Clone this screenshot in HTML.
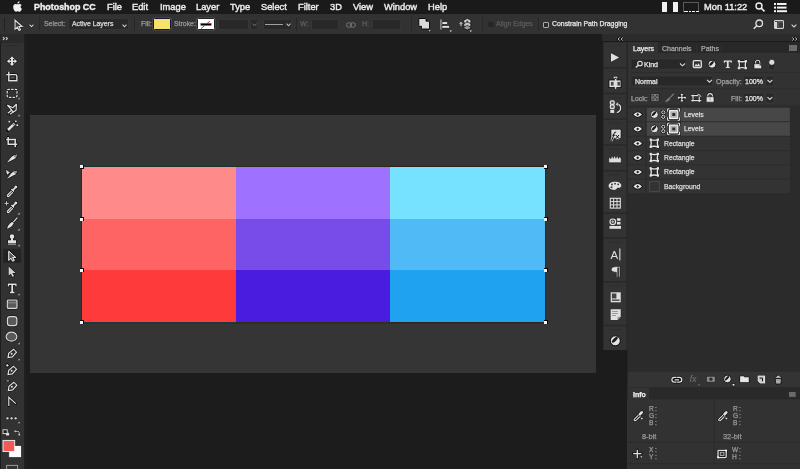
<!DOCTYPE html>
<html><head><meta charset="utf-8">
<style>
*{margin:0;padding:0;box-sizing:border-box}
html,body{width:800px;height:469px;overflow:hidden;background:#1c1c1c;font-family:"Liberation Sans",sans-serif;-webkit-font-smoothing:antialiased}
body{position:relative}
.a{position:absolute}
.t,.mi,.lbl{will-change:transform;-webkit-text-stroke:0.25px currentColor}
.t{position:absolute;white-space:nowrap;line-height:1}
svg{position:absolute;overflow:visible;will-change:transform}
#menubar{left:0;top:0;width:800px;height:14px;background:#1a1a1a}
.mi{position:absolute;top:3px;font-size:9.3px;color:#ececec;line-height:9px;white-space:nowrap;-webkit-text-stroke:0.4px #ececec}
#opts{left:0;top:14px;width:800px;height:20.3px;background:#323232}
.lbl{position:absolute;font-size:6.9px;color:#9a9a9a;line-height:8px;white-space:nowrap;margin-top:-0.3px}
.fld{position:absolute;background:#282828;border-radius:2px;box-shadow:inset 0 0 0 0.8px #3a3a3a}
.sep{position:absolute;width:1px;background:#282828}
#tbhead{left:0;top:34.3px;width:24px;height:7.5px;background:#2a2a2a}
#toolbar{left:0.5px;top:42px;width:23.3px;height:427px;background:#323232;border-top:1px solid #2a2a2a}
#paste{left:30px;top:115px;width:566.3px;height:258px;background:#353535;box-shadow:inset 0 0.6px 0 #3b3b3b}
#iconcol{left:603.5px;top:42.5px;width:22.8px;height:307.5px}
#phead{left:602px;top:34.3px;width:198px;height:7.2px;background:#2b2b2b}
#layers{left:627.5px;top:42px;width:172.5px;height:345px;background:#323232}
#info{left:627px;top:387px;width:173px;height:82px;background:#323232}
</style></head><body>
<div id="menubar" class="a">
 <svg style="left:13px;top:0.8px" width="9" height="11" viewBox="0 0 9 11"><path d="M6.600 0.200C6.700 1.300 5.800 2.600 4.400 2.600C4.300 1.400 5.300 0.300 6.600 0.200Z" fill="#f2f2f2"/><path d="M4.500 3.300C5.200 3.300 5.800 2.900 6.600 2.900C7 2.900 8 3 8.600 3.900C7 4.900 7.300 7.100 8.900 7.700C8.500 8.900 7.600 10.700 6.500 10.700C5.900 10.700 5.500 10.300 4.700 10.300C3.900 10.300 3.500 10.700 2.900 10.700C1.800 10.700 0.200 8.300 0.200 6C0.200 4.100 1.400 3 2.600 3C3.400 3 4 3.300 4.500 3.300Z" fill="#f2f2f2"/></svg>
 <div class="mi" style="left:34px;font-weight:bold;font-size:8.9px;color:#f2f2f2">Photoshop CC</div>
 <div class="mi" style="left:107px">File</div>
 <div class="mi" style="left:132px">Edit</div>
 <div class="mi" style="left:160px">Image</div>
 <div class="mi" style="left:196px">Layer</div>
 <div class="mi" style="left:230px">Type</div>
 <div class="mi" style="left:260.5px">Select</div>
 <div class="mi" style="left:297.5px">Filter</div>
 <div class="mi" style="left:329.5px">3D</div>
 <div class="mi" style="left:352.5px">View</div>
 <div class="mi" style="left:383.5px">Window</div>
 <div class="mi" style="left:428px">Help</div>
 <div class="a" style="left:662px;top:2px;width:5px;height:10px;background:#f0f0f0"></div>
 <div class="a" style="left:672.5px;top:2px;width:5.5px;height:10px;background:#f0f0f0"></div>
 <div class="a" style="left:683.3px;top:2px;width:15.6px;height:10px;border:1px solid #5a5a5a;border-bottom:none"></div>
 <div class="a" style="left:684px;top:10.5px;width:3.6px;height:1.4px;background:#f0f0f0"></div>
 <div class="a" style="left:688.6px;top:10.5px;width:2.6px;height:1.4px;background:#f0f0f0"></div>
 <div class="a" style="left:692.3px;top:10.5px;width:2.6px;height:1.4px;background:#f0f0f0"></div>
 <div class="a" style="left:695.8px;top:10.5px;width:3px;height:1.4px;background:#f0f0f0"></div>
 <div class="mi" style="left:703.5px">Mon 11:22</div>
 <svg style="left:755px;top:2px" width="11" height="10" viewBox="0 0 11 10"><circle cx="4" cy="4" r="3" fill="none" stroke="#f0f0f0" stroke-width="1.4"/><path d="M6.200 6.200L9.500 9.300" stroke="#f0f0f0" stroke-width="1.600"/></svg>
 <svg style="left:773.5px;top:2.5px" width="13" height="10" viewBox="0 0 13 10"><rect x="0" y="0" width="2" height="2" fill="#f0f0f0"/><rect x="3" y="0" width="9.500" height="2" fill="#f0f0f0"/><rect x="0" y="3.600" width="2" height="2" fill="#f0f0f0"/><rect x="3" y="3.600" width="9.500" height="2" fill="#f0f0f0"/><rect x="0" y="7.200" width="2" height="2" fill="#f0f0f0"/><rect x="3" y="7.200" width="10" height="2" fill="#f0f0f0"/></svg>
</div>
<div id="opts" class="a">
 <div class="a" style="left:3.5px;top:3.5px;width:1px;height:13.5px;background:#222"></div>
 <svg style="left:13.8px;top:5px" width="10" height="13" viewBox="0 0 10 13"><path d="M1 1V10.300L3.300 8.200L5 11.500L6.600 10.700L5 7.500H8.200Z" fill="none" stroke="#080808" stroke-width="2" stroke-linejoin="round"/><path d="M1 1V10.300L3.300 8.200L5 11.500L6.600 10.700L5 7.500H8.200Z" fill="#3a3a3a" stroke="#e2e2e2" stroke-width="1.100" stroke-linejoin="miter"/></svg>
 <svg style="left:28.5px;top:9.6px" width="5" height="4" viewBox="0 0 5 4"><path d="M0.500 0.600L2.500 2.600L4.500 0.600" fill="none" stroke="#080808" stroke-width="1.900"/><path d="M0.500 0.600L2.500 2.600L4.500 0.600" fill="none" stroke="#dadada" stroke-width="1.100"/></svg>
 <div class="sep" style="left:38.5px;top:3px;height:14px"></div>
 <div class="lbl" style="left:43.5px;top:6.5px">Select:</div>
 <div class="fld" style="left:68px;top:4.4px;width:61px;height:11.4px"></div>
 <div class="lbl" style="left:72px;top:6.5px;color:#dcdcdc">Active Layers</div>
 <svg style="left:122px;top:9.5px" width="5" height="4" viewBox="0 0 5 4"><path d="M0.500 0.700L2.500 2.800L4.500 0.700" fill="none" stroke="#d0d0d0" stroke-width="1.100"/></svg>
 <div class="sep" style="left:134px;top:3px;height:14px"></div>
 <div class="lbl" style="left:141px;top:6.5px">Fill:</div>
 <div class="a" style="left:152.5px;top:4px;width:18.5px;height:12.4px;background:#f7e26a;border:1.3px solid #14143a;border-radius:1.5px;box-shadow:0 0 0 0.6px #555"></div>
 <div class="lbl" style="left:173.5px;top:6.5px">Stroke:</div>
 <div class="a" style="left:196.5px;top:4px;width:18.5px;height:12.4px;background:#fff;border:1.3px solid #222;border-radius:1.5px;box-shadow:0 0 0 0.6px #555"></div>
 <svg style="left:200px;top:5.5px" width="12" height="10" viewBox="0 0 12 10"><path d="M1 8.600L10 1" stroke="#ee2020" stroke-width="1"/><rect x="0.700" y="3.200" width="10.600" height="2.400" fill="#000" stroke="#999" stroke-width="0.500"/></svg>
 <div class="fld" style="left:218px;top:4.5px;width:31px;height:11px"></div>
 <div class="fld" style="left:250px;top:4.5px;width:8px;height:11px"></div>
 <svg style="left:252px;top:9.2px" width="5" height="4" viewBox="0 0 5 4"><path d="M0.500 0.700L2.500 2.800L4.500 0.700" fill="none" stroke="#777" stroke-width="1"/></svg>
 <div class="fld" style="left:263px;top:4.5px;width:29px;height:11px"></div>
 <div class="a" style="left:265px;top:9.6px;width:18px;height:1px;background:#a0a0a0"></div>
 <svg style="left:286px;top:8.6px" width="5" height="4" viewBox="0 0 5 4"><path d="M0.500 0.700L2.500 2.800L4.500 0.700" fill="none" stroke="#c0c0c0" stroke-width="1.100"/></svg>
 <div class="sep" style="left:296px;top:3px;height:14px"></div>
 <div class="lbl" style="left:300px;top:6.5px;color:#5e5e5e">W:</div>
 <div class="fld" style="left:311px;top:4.5px;width:28px;height:11px"></div>
 <svg style="left:346px;top:8px" width="10" height="6" viewBox="0 0 10 6"><rect x="0.600" y="0.800" width="5" height="4.400" rx="2.200" fill="none" stroke="#6a6a6a" stroke-width="1.100"/><rect x="4.300" y="0.800" width="5" height="4.400" rx="2.200" fill="none" stroke="#6a6a6a" stroke-width="1.100"/></svg>
 <div class="lbl" style="left:362px;top:6.5px;color:#5e5e5e">H:</div>
 <div class="fld" style="left:371.5px;top:4.5px;width:29px;height:11px"></div>
 <div class="sep" style="left:411px;top:3px;height:14px"></div>
 <svg style="left:418px;top:4px" width="14" height="14" viewBox="0 0 14 14"><path d="M0.800 0.500H7.300Q8 0.500 8 1.200V3.200H10.800Q11.500 3.200 11.500 3.900V10.300Q11.500 11 10.800 11H4.200Q3.500 11 3.500 10.300V8.300H1.500Q0.800 8.300 0.800 7.600Z" fill="#dadada" stroke="#000" stroke-width="0.900"/><path d="M10.600 12.200L12.600 12.200L11.600 13.500Z" fill="#e8e8e8"/></svg>
 <svg style="left:439.5px;top:4.5px" width="13" height="14" viewBox="0 0 13 14"><rect x="0.500" y="0.500" width="1" height="10" fill="#d8d8d8"/><rect x="2" y="2.800" width="5.500" height="2.500" fill="#e0e0e0" stroke="#000" stroke-width="0.500"/><rect x="2" y="6.600" width="7.500" height="2.500" fill="#e0e0e0" stroke="#000" stroke-width="0.500"/><path d="M9.500 11.500L12 11.500L10.750 13Z" fill="#e8e8e8"/></svg>
 <svg style="left:459px;top:4px" width="14" height="14" viewBox="0 0 14 14"><path d="M2 8L2 4.500M0.700 5.800L2 4.300L3.300 5.800" stroke="#e0e0e0" stroke-width="1" fill="none"/><path d="M8.300 0.500L11.800 2.300L11.800 4.500L8.300 6.300L4.800 4.500L4.800 2.300Z" fill="#d8d8d8" stroke="#000" stroke-width="0.600"/><path d="M8.300 4L11.800 5.800L11.800 8L8.300 9.800L4.800 8L4.800 5.800Z" fill="#c8c8c8" stroke="#000" stroke-width="0.600"/><path d="M8.300 7.300L11.800 9.100L11.800 10.300L8.300 12.100L4.800 10.300L4.800 9.100Z" fill="#999" stroke="#000" stroke-width="0.600"/><circle cx="8.300" cy="3.400" r="1" fill="#333"/><path d="M10.500 12.500L13 12.500L11.750 14Z" fill="#e8e8e8"/></svg>
 <div class="sep" style="left:482px;top:3px;height:14px"></div>
 <div class="a" style="left:488px;top:7.6px;width:5.6px;height:5.6px;border-radius:1px;background:#262626"></div>
 <div class="lbl" style="left:496px;top:6.5px;color:#5c5c5c">Align Edges</div>
 <div class="sep" style="left:537.5px;top:3px;height:14px"></div>
 <div class="a" style="left:543px;top:8px;width:6px;height:6px;border:1px solid #aaa;border-radius:1px;background:#2a2a2a"></div>
 <div class="lbl" style="left:551.5px;top:6.5px;color:#e6e6e6">Constrain Path Dragging</div>
 <svg style="left:752.5px;top:5px" width="11" height="11" viewBox="0 0 11 11"><circle cx="6.200" cy="4.300" r="3.300" fill="none" stroke="#e0e0e0" stroke-width="1.300"/><path d="M3.800 6.800L0.800 9.800" stroke="#e0e0e0" stroke-width="1.500"/></svg>
 <div class="a" style="left:773.6px;top:6.2px;width:10.8px;height:9px;border:1.4px solid #d4d4d4;border-radius:1px;background:#555"></div>
 <div class="a" style="left:775px;top:7.6px;width:2.4px;height:6.2px;background:#d4d4d4"></div>
 <div class="a" style="left:778.5px;top:8.6px;width:4.5px;height:4.2px;background:#3a3a3a"></div>
 <svg style="left:791px;top:9.5px" width="6" height="4" viewBox="0 0 6 4"><path d="M0.600 0.700L3 3L5.400 0.700" fill="none" stroke="#d0d0d0" stroke-width="1.100"/></svg>
</div>
<div id="tbhead" class="a"></div>
<div id="toolbar" class="a"></div>
<div class="a" style="left:23.5px;top:34px;width:2px;height:435px;background:#1f1f1f"></div>
<svg style="left:0;top:0" width="24" height="469" viewBox="0 0 24 469">
 <path d="M2.800 37L4.600 38.500L2.800 40M5.800 37L7.600 38.500L5.800 40" fill="none" stroke="#0a0a0a" stroke-width="1.900"/><path d="M2.800 37L4.600 38.500L2.800 40M5.800 37L7.600 38.500L5.800 40" fill="none" stroke="#c4c4c4" stroke-width="1.100"/>
 <path d="M6.500 45.600H18.500" stroke="#2a2a2a" stroke-width="0.800"/>
 <!-- move -->
 <path d="M12 56.300L14.600 59H13V60.400H14.400V58.800L17.100 61.200L14.400 63.600V62H13V63.400H14.600L12 66.100L9.400 63.400H11V62H9.600V63.600L6.900 61.200L9.600 58.800V60.400H11V59H9.400Z" fill="#0c0c0c" stroke="#0c0c0c" stroke-width="1.100" stroke-linejoin="round"/><path d="M12 56.300L14.600 59H13V60.400H14.400V58.800L17.100 61.200L14.400 63.600V62H13V63.400H14.600L12 66.100L9.400 63.400H11V62H9.600V63.600L6.900 61.200L9.600 58.800V60.400H11V59H9.400Z" fill="#e2e2e2" />
 <!-- artboard -->
 <path d="M8.800 71.800V80.700H16.900V76.200Q16.900 74.600 15.300 74.600H6.200" fill="none" stroke="#0c0c0c" stroke-width="2.500" stroke-linejoin="round"/><path d="M8.800 71.800V80.700H16.900V76.200Q16.900 74.600 15.300 74.600H6.200" fill="none" stroke="#e2e2e2" stroke-width="1.400"/>
 <path d="M10.500 77.600H14.500" stroke="#777" stroke-width="0.600"/>
 <!-- marquee -->
 <rect x="7.200" y="89.300" width="9.800" height="8" rx="1.300" fill="none" stroke="#0c0c0c" stroke-width="2.300" stroke-dasharray="2.400 1.200" stroke-dashoffset="1"/>
 <rect x="7.200" y="89.300" width="9.800" height="8" rx="1.300" fill="none" stroke="#e2e2e2" stroke-width="1.300" stroke-dasharray="2.400 1.200" stroke-dashoffset="1"/>
 <path d="M17.8 99.3h1.800v-1.800z" fill="#d0d0d0"/>
 <!-- lasso -->
 <path d="M7.300 105L12.800 107.700L16.400 104.300L16.100 110.200L10 114.300M7.300 105L11.800 110.200L7.700 113.300M13.200 111.800L10.300 109.200" fill="none" stroke="#0c0c0c" stroke-width="2.300" stroke-linejoin="round" stroke-linecap="round"/><path d="M7.300 105L12.800 107.700L16.400 104.300L16.100 110.200L10 114.300M7.300 105L11.800 110.200L7.700 113.300M13.200 111.800L10.300 109.200" fill="none" stroke="#e2e2e2" stroke-width="1.200" stroke-linejoin="round"/>
 <path d="M17.800 116.300h1.800v-1.800z" fill="#d0d0d0"/>
 <!-- wand -->
 <path d="M8 130L14.700 123.300" fill="none" stroke="#0c0c0c" stroke-width="3.70" stroke-linejoin="round" stroke-linecap="round" /><path d="M8 130L14.700 123.300" fill="none" stroke="#e2e2e2" stroke-width="2.6" />
 <path d="M12.800 125.200L14.700 123.300" stroke="#666" stroke-width="1.200"/>
 <circle cx="9.300" cy="121.600" r="0.900" fill="#e2e2e2"/><circle cx="15.800" cy="121.300" r="0.900" fill="#e2e2e2"/><circle cx="17.300" cy="125.200" r="0.900" fill="#e2e2e2"/>
 <!-- crop -->
 <path d="M8.200 137V144.200H17.200M6.200 139.500H15.200V147.200" fill="none" stroke="#0c0c0c" stroke-width="2.60" stroke-linejoin="round" stroke-linecap="round" /><path d="M8.200 137V144.200H17.200M6.200 139.500H15.200V147.200" fill="none" stroke="#e2e2e2" stroke-width="1.5" />
 <!-- slice -->
 <path d="M6.800 162.8L11.300 157.0L13.600 155.4L17.200 154.6L15.500 158.2L13.300 159.4Z" fill="#0c0c0c" stroke="#0c0c0c" stroke-width="1.1" stroke-linejoin="round"/><path d="M6.800 162.8L11.300 157.0L13.600 155.4L17.200 154.6L15.500 158.2L13.300 159.4Z" fill="#e2e2e2"/><path d="M13.300 155.5L17.200 154.6L15.500 158.2Z" fill="#8c8c8c"/>
 <!-- slice select -->
 <path d="M6.800 179.0L11.300 173.2L13.600 171.6L17.200 170.8L15.500 174.4L13.300 175.6Z" fill="#0c0c0c" stroke="#0c0c0c" stroke-width="1.1" stroke-linejoin="round"/><path d="M6.800 179.0L11.300 173.2L13.600 171.6L17.200 170.8L15.500 174.4L13.300 175.6Z" fill="#e2e2e2"/><path d="M13.300 171.7L17.200 170.8L15.500 174.4Z" fill="#8c8c8c"/>
 <path d="M6 169.800L9.800 172.600L7 174.800Z" fill="#0c0c0c" stroke="#0c0c0c" stroke-width="1.1" stroke-linejoin="round"/><path d="M6 169.800L9.800 172.600L7 174.800Z" fill="#e2e2e2"/>
 <!-- eyedropper -->
 <path d="M12.200 190.400L7.600 195Q6.900 195.900 7.500 196.400Q8.100 196.900 8.900 196.200L13.500 191.600" fill="none" stroke="#0c0c0c" stroke-width="2.30" stroke-linejoin="round" stroke-linecap="round"/><path d="M12.200 190.400L7.600 195Q6.900 195.900 7.500 196.400Q8.100 196.900 8.900 196.200L13.500 191.600" fill="none" stroke="#e2e2e2" stroke-width="1.2" stroke-linecap="round"/>
 <path d="M10.900 189.500L11.900 188.500L12.800 189.100L14.300 187.600Q14.400 185.700 15.800 185.600Q17.300 185.600 17.300 187.100Q17.200 188.500 15.400 188.700L13.900 190.200L14.500 191.100L13.500 192.100Z" fill="#0c0c0c" stroke="#0c0c0c" stroke-width="1.1" stroke-linejoin="round"/><path d="M10.900 189.500L11.900 188.500L12.800 189.100L14.300 187.600Q14.400 185.700 15.800 185.600Q17.300 185.600 17.300 187.100Q17.200 188.500 15.400 188.700L13.900 190.200L14.500 191.100L13.500 192.100Z" fill="#e2e2e2"/>
 <!-- heal -->
 <path d="M12.200 206.400L7.600 211Q6.900 211.900 7.500 212.400Q8.100 212.900 8.900 212.200L13.500 207.600" fill="none" stroke="#0c0c0c" stroke-width="2.30" stroke-linejoin="round" stroke-linecap="round"/><path d="M12.200 206.400L7.600 211Q6.900 211.900 7.500 212.400Q8.100 212.900 8.900 212.200L13.500 207.600" fill="none" stroke="#e2e2e2" stroke-width="1.2" stroke-linecap="round"/>
 <path d="M10.900 205.500L11.900 204.500L12.800 205.100L14.300 203.600Q14.400 201.700 15.800 201.600Q17.300 201.600 17.300 203.100Q17.200 204.500 15.400 204.700L13.900 206.200L14.500 207.100L13.500 208.100Z" fill="#0c0c0c" stroke="#0c0c0c" stroke-width="1.1" stroke-linejoin="round"/><path d="M10.900 205.500L11.900 204.500L12.800 205.100L14.300 203.600Q14.400 201.700 15.800 201.600Q17.300 201.600 17.300 203.100Q17.200 204.500 15.400 204.700L13.900 206.200L14.500 207.100L13.500 208.100Z" fill="#e2e2e2"/>
 <path d="M6.600 201.600V205.200M4.800 203.400H8.400" fill="none" stroke="#0c0c0c" stroke-width="2.00" stroke-linejoin="round" stroke-linecap="round"/><path d="M6.600 201.600V205.200M4.800 203.400H8.400" fill="none" stroke="#e2e2e2" stroke-width="0.9" stroke-linecap="round"/>
 <path d="M17.8 214.4h1.800v-1.800z" fill="#d0d0d0"/>
 <!-- brush -->
 <path d="M17 217.800L12.700 222.800" fill="none" stroke="#0c0c0c" stroke-width="2.30" stroke-linejoin="round" stroke-linecap="round"/><path d="M17 217.800L12.700 222.800" fill="none" stroke="#e2e2e2" stroke-width="1.2" stroke-linecap="round"/>
 <path d="M12.300 221.800Q9.600 223.400 8.300 225.600Q7.300 227.600 7 228.700Q8.300 228.400 10.300 227.200Q12.500 225.800 13.800 223.200Z" fill="#0c0c0c" stroke="#0c0c0c" stroke-width="1.1" stroke-linejoin="round"/><path d="M12.300 221.800Q9.600 223.400 8.300 225.600Q7.300 227.600 7 228.700Q8.300 228.400 10.300 227.200Q12.500 225.800 13.800 223.200Z" fill="#e2e2e2"/>
 <path d="M17.8 230.4h1.800v-1.800z" fill="#d0d0d0"/>
 <!-- stamp -->
 <path d="M12 234.200A2.300 2.300 0 1 1 12 238.800A2.300 2.300 0 1 1 12 234.200ZM11 238.500H13V240.300H16V243H8V240.300H11Z" fill="#0c0c0c" stroke="#0c0c0c" stroke-width="1.100" stroke-linejoin="round"/><path d="M12 234.200A2.300 2.300 0 1 1 12 238.800A2.300 2.300 0 1 1 12 234.200ZM11 238.500H13V240.300H16V243H8V240.300H11Z" fill="#e2e2e2" />
 <rect x="8" y="243.500" width="8" height="1.200" fill="#aaa"/>
 <path d="M17.8 246.3h1.800v-1.800z" fill="#d0d0d0"/>
 <!-- active bg -->
 <rect x="3.400" y="248.800" width="17.600" height="14.100" fill="#232323"/>
 <!-- direct select -->
 <path d="M8.800 251.300V260.300L11 258.200L12.700 261.200L14.200 260.400L12.600 257.400H15.600Z" fill="none" stroke="#0c0c0c" stroke-width="2.10" stroke-linejoin="round" stroke-linecap="round" /><path d="M8.800 251.300V260.300L11 258.200L12.700 261.200L14.200 260.400L12.600 257.400H15.600Z" fill="none" stroke="#e2e2e2" stroke-width="1" />
 <path d="M8.800 251.300V260.300L11 258.200L12.700 261.200L14.200 260.400L12.600 257.400H15.600Z" fill="#555"/>
 <path d="M8.800 251.300V260.300L11 258.200L12.700 261.200L14.200 260.400L12.600 257.400H15.600Z" fill="none" stroke="#e2e2e2" stroke-width="1"/>
 <!-- path select -->
 <path d="M8.600 266.600V275.800L10.800 273.700L12.500 276.900L14.100 276.100L12.400 273H15.700Z" fill="#0c0c0c" stroke="#0c0c0c" stroke-width="1.100" stroke-linejoin="round"/><path d="M8.600 266.600V275.800L10.800 273.700L12.500 276.900L14.100 276.100L12.400 273H15.700Z" fill="#d0d0d0" />
 <!-- T -->
 <path d="M7.800 283.400H16.600V286.600H15.600L15.200 285H13.100V291.800H14.500V293.200H9.900V291.800H11.300V285H9.200L8.800 286.600H7.800Z" fill="#0c0c0c" stroke="#0c0c0c" stroke-width="1.100" stroke-linejoin="round"/><path d="M7.800 283.400H16.600V286.600H15.600L15.200 285H13.100V291.800H14.500V293.200H9.900V291.800H11.300V285H9.200L8.800 286.600H7.800Z" fill="#e2e2e2" />
 <path d="M17.8 295.3h1.800v-1.800z" fill="#d0d0d0"/>
 <!-- rect -->
 <rect x="7.300" y="300" width="9.700" height="8.300" rx="0.800" fill="#5a5a5a" stroke="#0c0c0c" stroke-width="2.300"/>
 <rect x="7.300" y="300" width="9.700" height="8.300" rx="0.800" fill="#5a5a5a" stroke="#d8d8d8" stroke-width="1.200"/>
 <path d="M8 302.800H16.300" stroke="#9a9a9a" stroke-width="0.800"/>
 <!-- rounded rect -->
 <rect x="7.400" y="316.700" width="9.500" height="8.900" rx="2.600" fill="#5a5a5a" stroke="#0c0c0c" stroke-width="2.300"/>
 <rect x="7.400" y="316.700" width="9.500" height="8.900" rx="2.600" fill="#5a5a5a" stroke="#d8d8d8" stroke-width="1.200"/>
 <!-- ellipse -->
 <ellipse cx="11.500" cy="336.700" rx="5.400" ry="4.500" fill="#5a5a5a" stroke="#0c0c0c" stroke-width="2.300"/>
 <ellipse cx="11.500" cy="336.700" rx="5.400" ry="4.500" fill="#5a5a5a" stroke="#d8d8d8" stroke-width="1.200"/>
 <path d="M17.8 344.3h1.800v-1.800z" fill="#d0d0d0"/>
 <!-- pen -->
 <path d="M8 357.600L8.700 353.300L13.500 349.200L16.500 352.200L12.300 356.900Z" fill="none" stroke="#0c0c0c" stroke-width="2.30" stroke-linejoin="round" stroke-linecap="round" /><path d="M8 357.600L8.700 353.300L13.500 349.200L16.500 352.200L12.300 356.900Z" fill="none" stroke="#e2e2e2" stroke-width="1.2" />
 <circle cx="11.600" cy="353.700" r="1" fill="#e2e2e2"/>
 <path d="M17.8 360.3h1.800v-1.800z" fill="#d0d0d0"/>
 <!-- add anchor -->
 <path d="M8 374.600L8.700 370.300L13.500 366.200L16.500 369.200L12.300 373.900Z" fill="none" stroke="#0c0c0c" stroke-width="2.30" stroke-linejoin="round" stroke-linecap="round" /><path d="M8 374.600L8.700 370.300L13.500 366.200L16.500 369.200L12.300 373.900Z" fill="none" stroke="#e2e2e2" stroke-width="1.2" />
 <circle cx="11.600" cy="370.700" r="1" fill="#e2e2e2"/>
 <path d="M7.300 364V366.800M5.900 365.400H8.700" fill="none" stroke="#0c0c0c" stroke-width="2.00" stroke-linejoin="round" stroke-linecap="round" /><path d="M7.300 364V366.800M5.900 365.400H8.700" fill="none" stroke="#e2e2e2" stroke-width="0.9" />
 <!-- delete anchor -->
 <path d="M8.300 390.600L9 386.300L13.800 382.200L16.800 385.200L12.600 389.900Z" fill="none" stroke="#0c0c0c" stroke-width="2.30" stroke-linejoin="round" stroke-linecap="round" /><path d="M8.300 390.600L9 386.300L13.800 382.200L16.800 385.200L12.600 389.900Z" fill="none" stroke="#e2e2e2" stroke-width="1.2" />
 <circle cx="11.900" cy="386.700" r="1" fill="#e2e2e2"/>
 <path d="M6.300 380.900H9.100" fill="none" stroke="#0c0c0c" stroke-width="2.00" stroke-linejoin="round" stroke-linecap="round" /><path d="M6.300 380.900H9.100" fill="none" stroke="#e2e2e2" stroke-width="0.9" />
 <!-- convert -->
 <path d="M8.800 406V397.300L15.800 403.600" fill="none" stroke="#0c0c0c" stroke-width="2.30" stroke-linejoin="round" stroke-linecap="round" /><path d="M8.800 406V397.300L15.800 403.600" fill="none" stroke="#e2e2e2" stroke-width="1.2" />
 <!-- dots -->
 <circle cx="7.500" cy="418.300" r="1.400" fill="#e2e2e2" stroke="#0c0c0c" stroke-width="0.500"/><circle cx="11.600" cy="418.300" r="1.400" fill="#e2e2e2" stroke="#0c0c0c" stroke-width="0.500"/><circle cx="15.700" cy="418.300" r="1.400" fill="#e2e2e2" stroke="#0c0c0c" stroke-width="0.500"/>
 <path d="M17.8 423.3h1.800v-1.800z" fill="#d0d0d0"/>
 <!-- default colors -->
 <rect x="5.300" y="432.300" width="4.200" height="3.600" fill="#e2e2e2" stroke="#0c0c0c" stroke-width="0.600"/>
 <rect x="3" y="429.800" width="4.200" height="3.800" fill="#1a1a1a" stroke="#e2e2e2" stroke-width="0.900"/>
 <!-- swap -->
 <path d="M15.300 431.300H17.700Q19.200 431.300 19.200 432.800V434.600" fill="none" stroke="#0c0c0c" stroke-width="2.00" stroke-linejoin="round" stroke-linecap="round" /><path d="M15.300 431.300H17.700Q19.200 431.300 19.200 432.800V434.600" fill="none" stroke="#e2e2e2" stroke-width="0.9" />
 <path d="M14 431.300L15.600 430V432.600Z M18 434.300H20.400L19.200 436Z" fill="#e2e2e2"/>
 <!-- bg swatch -->
 <rect x="8.800" y="445.600" width="12.500" height="11.800" fill="#fafafa" stroke="#222" stroke-width="0.600"/>
 <!-- fg swatch -->
 <rect x="3" y="440.400" width="11.700" height="11.100" fill="#f25a5a" stroke="#f4f4f4" stroke-width="0.900"/>
 <!-- quick mask -->
 <rect x="6.600" y="465.400" width="11" height="6" fill="none" stroke="#999" stroke-width="1"/>
</svg>
<div id="paste" class="a"></div>
<!-- artboard -->
<div class="a" style="left:82px;top:167px;width:154px;height:52px;background:#ff8a8a"></div>
<div class="a" style="left:236px;top:167px;width:154px;height:52px;background:#9e71ff"></div>
<div class="a" style="left:390px;top:167px;width:155px;height:52px;background:#76e2ff"></div>
<div class="a" style="left:82px;top:219px;width:154px;height:51px;background:#ff6464"></div>
<div class="a" style="left:236px;top:219px;width:154px;height:51px;background:#774ce8"></div>
<div class="a" style="left:390px;top:219px;width:155px;height:51px;background:#4fbaf5"></div>
<div class="a" style="left:82px;top:270px;width:154px;height:52px;background:#ff3a3a"></div>
<div class="a" style="left:236px;top:270px;width:154px;height:52px;background:#4a1ce0"></div>
<div class="a" style="left:390px;top:270px;width:155px;height:52px;background:#1fa2f0"></div>
<div class="a" style="left:81px;top:166.2px;width:155px;height:0.9px;background:#183232"></div>
<div class="a" style="left:236px;top:166.2px;width:154px;height:0.9px;background:#2a2e14"></div>
<div class="a" style="left:390px;top:166.2px;width:156px;height:0.9px;background:#30201c"></div>
<div class="a" style="left:81.1px;top:166.2px;width:0.9px;height:156.5px;background:#183232"></div>
<div class="a" style="left:81px;top:322px;width:155px;height:0.9px;background:#1e3a3a"></div>
<div class="a" style="left:236px;top:322px;width:154px;height:0.9px;background:#2a3214"></div>
<div class="a" style="left:390px;top:322px;width:156px;height:0.9px;background:#32261a"></div>
<div class="a" style="left:81px;top:322.9px;width:465px;height:0.8px;background:#2e2e2e"></div>
<div class="a" style="left:545px;top:166.2px;width:0.9px;height:156.5px;background:#32261a"></div>
<div class="a" style="left:79.5px;top:164.5px;width:4px;height:4px;background:#080808"></div><div class="a" style="left:80.3px;top:165.3px;width:3.2px;height:3.2px;background:#f4f4f4"></div>
<div class="a" style="left:79.5px;top:216.9px;width:4px;height:4px;background:#080808"></div><div class="a" style="left:80.3px;top:217.7px;width:3.2px;height:3.2px;background:#f4f4f4"></div>
<div class="a" style="left:79.5px;top:268.3px;width:4px;height:4px;background:#080808"></div><div class="a" style="left:80.3px;top:269.1px;width:3.2px;height:3.2px;background:#f4f4f4"></div>
<div class="a" style="left:79.5px;top:320.3px;width:4px;height:4px;background:#080808"></div><div class="a" style="left:80.3px;top:321.1px;width:3.2px;height:3.2px;background:#f4f4f4"></div>
<div class="a" style="left:543.5px;top:164.5px;width:4px;height:4px;background:#080808"></div><div class="a" style="left:544.3px;top:165.3px;width:3.2px;height:3.2px;background:#f4f4f4"></div>
<div class="a" style="left:543.5px;top:216.9px;width:4px;height:4px;background:#080808"></div><div class="a" style="left:544.3px;top:217.7px;width:3.2px;height:3.2px;background:#f4f4f4"></div>
<div class="a" style="left:543.5px;top:268.3px;width:4px;height:4px;background:#080808"></div><div class="a" style="left:544.3px;top:269.1px;width:3.2px;height:3.2px;background:#f4f4f4"></div>
<div class="a" style="left:543.5px;top:320.3px;width:4px;height:4px;background:#080808"></div><div class="a" style="left:544.3px;top:321.1px;width:3.2px;height:3.2px;background:#f4f4f4"></div>
<div id="phead" class="a"></div>
<svg style="left:617px;top:36.5px" width="8" height="5" viewBox="0 0 8 5"><path d="M2.800 0.500L1 2L2.800 3.500M5.800 0.500L4 2L5.800 3.500" fill="none" stroke="#0a0a0a" stroke-width="1.800"/><path d="M2.800 0.500L1 2L2.800 3.500M5.800 0.500L4 2L5.800 3.500" fill="none" stroke="#c0c0c0" stroke-width="1"/></svg>
<svg style="left:791px;top:36.5px" width="8" height="5" viewBox="0 0 8 5"><path d="M1.200 0.500L3 2L1.200 3.500M4.200 0.500L6 2L4.200 3.500" fill="none" stroke="#0a0a0a" stroke-width="1.800"/><path d="M1.200 0.500L3 2L1.200 3.500M4.200 0.500L6 2L4.200 3.500" fill="none" stroke="#c0c0c0" stroke-width="1"/></svg>
<div class="a" style="left:602.5px;top:41.5px;width:25px;height:308.5px;background:#282828"></div>
<svg style="left:0;top:0" width="800" height="469" viewBox="0 0 800 469">
<rect x="603.5" y="42.5" width="22.8" height="24.5" fill="#333"/><path d="M609 45.7H621" stroke="#2a2a2a" stroke-width="1" stroke-dasharray="1 0.6"/><rect x="603.5" y="68.5" width="22.8" height="24.3" fill="#333"/><path d="M609 71.7H621" stroke="#2a2a2a" stroke-width="1" stroke-dasharray="1 0.6"/><rect x="603.5" y="94.3" width="22.8" height="24.2" fill="#333"/><path d="M609 97.5H621" stroke="#2a2a2a" stroke-width="1" stroke-dasharray="1 0.6"/><rect x="603.5" y="120" width="22.8" height="24.3" fill="#333"/><path d="M609 123.2H621" stroke="#2a2a2a" stroke-width="1" stroke-dasharray="1 0.6"/><rect x="603.5" y="145.8" width="22.8" height="24.2" fill="#333"/><path d="M609 149.0H621" stroke="#2a2a2a" stroke-width="1" stroke-dasharray="1 0.6"/><rect x="603.5" y="171.5" width="22.8" height="41.1" fill="#333"/><path d="M609 174.7H621" stroke="#2a2a2a" stroke-width="1" stroke-dasharray="1 0.6"/><rect x="603.5" y="214.1" width="22.8" height="23.2" fill="#333"/><path d="M609 217.3H621" stroke="#2a2a2a" stroke-width="1" stroke-dasharray="1 0.6"/><rect x="603.5" y="238.8" width="22.8" height="42.2" fill="#333"/><path d="M609 242.0H621" stroke="#2a2a2a" stroke-width="1" stroke-dasharray="1 0.6"/><rect x="603.5" y="282.5" width="22.8" height="42.3" fill="#333"/><path d="M609 285.7H621" stroke="#2a2a2a" stroke-width="1" stroke-dasharray="1 0.6"/><rect x="603.5" y="326.3" width="22.8" height="23.7" fill="#333"/><path d="M609 329.5H621" stroke="#2a2a2a" stroke-width="1" stroke-dasharray="1 0.6"/>
 <!-- play -->
 <path d="M610.500 52.500L620 57.500L610.500 62.500Z" fill="#e0e0e0" stroke="#111" stroke-width="0.700"/>
 <!-- properties -->
 <path d="M613 76.300H618L617.300 79H613.700Z" fill="#dedede" stroke="#0a0a0a" stroke-width="0.600"/>
 <rect x="614.900" y="78" width="1.500" height="11.200" fill="#dedede" stroke="#0a0a0a" stroke-width="0.400"/>
 <rect x="609" y="80" width="12" height="7.600" fill="#dedede" stroke="#0a0a0a" stroke-width="0.800"/>
 <rect x="610.900" y="81.900" width="2.700" height="3.700" fill="#4a4a4a"/>
 <rect x="617.400" y="81.900" width="2.700" height="3.700" fill="#4a4a4a"/>
 <rect x="614.900" y="79" width="1.500" height="9" fill="#dedede"/>
 <!-- history -->
 <rect x="610.400" y="100.800" width="3.800" height="3.600" rx="1.200" fill="#555" stroke="#dedede" stroke-width="1.300"/>
 <rect x="610.400" y="104.900" width="3.800" height="3.600" rx="1.200" fill="#555" stroke="#dedede" stroke-width="1.300"/>
 <rect x="610" y="109.300" width="4.600" height="3.900" fill="#dedede" stroke="#0a0a0a" stroke-width="0.500"/>
 <path d="M617 104.200Q620.600 104.200 620.600 108Q620.600 111.500 616.800 112.600" fill="none" stroke="#0a0a0a" stroke-width="2.500"/>
 <path d="M617 104.200Q620.600 104.200 620.600 108Q620.600 111.500 616.800 112.600" fill="none" stroke="#dedede" stroke-width="1.400"/>
 <path d="M615.300 104.200L618.300 101.600V106.800Z" fill="#dedede" stroke="#0a0a0a" stroke-width="0.500"/>
 <!-- brush fx -->
 <rect x="611" y="129.200" width="10" height="9" fill="#dedede" stroke="#0a0a0a" stroke-width="0.600"/>
 <path d="M611.300 140.800Q613.300 138 613.700 134.300Q614.100 131.800 616.200 132M612.300 135.200H615.200M615.800 135L619.200 138.800M619 135L615.800 138.800" fill="none" stroke="#dedede" stroke-width="2.200"/>
 <path d="M611.300 140.800Q613.300 138 613.700 134.300Q614.100 131.800 616.200 132M612.300 135.200H615.200M615.800 135L619.200 138.800M619 135L615.800 138.800" fill="none" stroke="#111" stroke-width="1"/>
 <!-- histogram -->
 <path d="M608.800 162.700V158.800L609.900 156.800L610.800 158.800L612.200 155.600L613.300 158.300L614.600 155.200L615.900 158.300L617.200 155.600L618.500 158.500L619.800 156.500L621.200 158.800V162.700Z" fill="#dedede" stroke="#0a0a0a" stroke-width="0.500"/>
 <!-- palette -->
 <path d="M615 181.700C619 181.700 621.300 183.300 621.300 185.500C621.300 187.500 619.500 188 618 187.700C617 187.500 616.500 189.900 614.500 189.900C611 189.900 608.600 188 608.600 185.800C608.600 183.300 611.300 181.700 615 181.700Z" fill="#e0e0e0"/>
 <circle cx="612" cy="184.500" r="0.900" fill="#333"/><circle cx="615" cy="183.700" r="0.900" fill="#333"/><circle cx="618.200" cy="184.300" r="0.900" fill="#333"/><circle cx="611.500" cy="187.300" r="1" fill="#333"/>
 <!-- grid -->
 <rect x="610.300" y="198.300" width="10" height="9.800" fill="none" stroke="#e0e0e0" stroke-width="1.100"/>
 <path d="M613.600 198.300V208.100M617 198.300V208.100M610.300 201.600H620.300M610.300 204.900H620.300" stroke="#e0e0e0" stroke-width="1"/>
 <!-- libraries -->
 <circle cx="612.800" cy="221.800" r="2.800" fill="none" stroke="#e0e0e0" stroke-width="1.200"/>
 <path d="M611.300 221.800H614.300M612.800 220.300V223.300" stroke="#e0e0e0" stroke-width="0.800"/>
 <rect x="617" y="218.300" width="3.500" height="2.500" fill="#e0e0e0"/><rect x="617" y="222" width="3.500" height="2.500" fill="#e0e0e0"/>
 <rect x="609.500" y="226" width="11.500" height="2.800" fill="#e0e0e0"/>
 <!-- A| -->
 <text x="610.500" y="258.700" font-family="Liberation Sans" font-size="11.500" fill="#e0e0e0">A</text>
 <rect x="619.300" y="248.500" width="1.100" height="12" fill="#e0e0e0"/>
 <!-- pilcrow -->
 <path d="M616.300 266.600H620V277.200H618.700V267.800H617.700V277.200H616.400V272.300C613.300 272.300 611.200 271.100 611.200 269.400C611.200 267.700 613.200 266.600 616.300 266.600Z" fill="#dedede" stroke="#0a0a0a" stroke-width="0.500"/>
 <!-- comps -->
 <rect x="610.700" y="292.300" width="10" height="10" fill="#e0e0e0"/>
 <rect x="611.900" y="293.500" width="4.500" height="5" fill="#444"/>
 <rect x="611.900" y="299.500" width="7.600" height="1.400" fill="#444"/>
 <!-- notes -->
 <path d="M610.700 309.300H620.700V316.800L617.500 320H610.700Z" fill="#e0e0e0"/>
 <path d="M612 311.500H618M612 313.500H618M612 315.500H616" stroke="#888" stroke-width="0.800"/>
 <path d="M617.500 320V316.800H620.700" fill="#999"/>
 <!-- circle -->
 <circle cx="615.300" cy="340.800" r="5" fill="#e2e2e2" stroke="#0a0a0a" stroke-width="1"/>
 <ellipse cx="614.800" cy="339.800" rx="3.800" ry="1.500" transform="rotate(-45 614.800 339.800)" fill="#1a1a1a"/>
</svg>
<div id="layers" class="a">
 <div class="a" style="left:0;top:0;width:173px;height:10.5px;background:#282828"></div>
 <div class="a" style="left:0.5px;top:0;width:29.5px;height:10.5px;background:#323232"></div>
 <div class="a" style="left:68.5px;top:1.5px;width:1px;height:9px;background:#303030"></div>
 <div class="a" style="left:93.5px;top:1.5px;width:1px;height:9px;background:#303030"></div>
 <div class="t" style="left:5px;top:2.8px;font-size:7px;color:#f0f0f0">Layers</div>
 <div class="t" style="left:34.5px;top:2.8px;font-size:7px;color:#a8a8a8">Channels</div>
 <div class="t" style="left:73px;top:2.8px;font-size:7px;color:#a8a8a8">Paths</div>
 <div class="a" style="left:161.5px;top:3px;width:7.5px;height:5.5px;background:#6a6a6a"></div>
</div>
<svg style="left:0;top:0" width="800" height="469" viewBox="0 0 800 469">
 <!-- kind row -->
 <rect x="630.800" y="58.900" width="55.400" height="10.300" rx="1" fill="#282828" stroke="#3c3c3c" stroke-width="0.800"/>
 <circle cx="640" cy="63.500" r="2.300" fill="none" stroke="#e0e0e0" stroke-width="1.100"/>
 <path d="M638.300 65.300L635.800 67.600" stroke="#e0e0e0" stroke-width="1.400"/>
 <path d="M680 63.5L682.5 65.8L685 63.5" fill="none" stroke="#d8d8d8" stroke-width="1.100"/>
 <rect x="693.300" y="60.700" width="8" height="6.800" rx="1" fill="#333" stroke="#e0e0e0" stroke-width="1.300"/>
 <path d="M694.500 66.300L696 63.700L697.300 65.300L698.600 63.300L700.200 66.300Z" fill="#e0e0e0"/>
 <circle cx="712" cy="64.200" r="4" fill="#e2e2e2" stroke="#0a0a0a" stroke-width="0.900"/>
 <ellipse cx="711.600" cy="63.400" rx="3" ry="1.200" transform="rotate(-45 711.600 63.400)" fill="#1a1a1a"/>
 <path d="M723.800 60.500H731.800V62.800H730.800L730.500 61.800H728.700V67H729.800V68H725.800V67H726.900V61.800H725.100L724.800 62.800H723.800Z" fill="#e0e0e0"/>
 <path d="M738.8 61.2Q742.30 62.30 745.80 61.2Q744.70 64.70 745.80 68.20Q742.30 67.10 738.8 68.20Q739.90 64.70 738.8 61.2Z" fill="#2a2a2a" stroke="#0a0a0a" stroke-width="2.300"/><path d="M738.8 61.2Q742.30 62.30 745.80 61.2Q744.70 64.70 745.80 68.20Q742.30 67.10 738.8 68.20Q739.90 64.70 738.8 61.2Z" fill="#2a2a2a" stroke="#e2e2e2" stroke-width="1.300"/><rect x="737.70" y="60.10" width="2.200" height="2.200" fill="#e2e2e2"/><rect x="744.70" y="60.10" width="2.200" height="2.200" fill="#e2e2e2"/><rect x="737.70" y="67.10" width="2.200" height="2.200" fill="#e2e2e2"/><rect x="744.70" y="67.10" width="2.200" height="2.200" fill="#e2e2e2"/>
 <path d="M755.600 64V62.300Q755.600 60.300 757.700 60.300Q759.800 60.300 759.800 62.300V64" fill="none" stroke="#0a0a0a" stroke-width="2"/><path d="M755.600 64V62.300Q755.600 60.300 757.700 60.300Q759.800 60.300 759.800 62.300V64" fill="none" stroke="#e2e2e2" stroke-width="1.100"/>
 <path d="M754 63.700H759.800L761.600 65.500V68.700H754Z" fill="#e2e2e2" stroke="#0a0a0a" stroke-width="0.600"/>
 <path d="M759.800 63.700V65.500H761.600" fill="none" stroke="#555" stroke-width="0.600"/>
 <rect x="768.600" y="62" width="6.400" height="8.200" rx="3.200" fill="#262626" stroke="#444" stroke-width="0.600"/>
 <circle cx="771.800" cy="62.300" r="3" fill="#dcdcdc" stroke="#0a0a0a" stroke-width="0.600"/>
 <path d="M631 72.500H800" stroke="#2c2c2c" stroke-width="0.800"/>
 <!-- normal row -->
 <rect x="630.800" y="75.900" width="82.200" height="10.100" rx="1" fill="#282828" stroke="#3c3c3c" stroke-width="0.800"/>
 <path d="M707 79.9L709.5 82.2L712 79.9" fill="none" stroke="#d8d8d8" stroke-width="1.100"/>
 <rect x="743" y="75.900" width="21" height="10.100" rx="1" fill="#282828" stroke="#3c3c3c" stroke-width="0.800"/>
 <rect x="765.800" y="75.900" width="8.200" height="10.100" rx="1" fill="#282828" stroke="#3c3c3c" stroke-width="0.800"/>
 <path d="M767.5 80L769.9 82.3L772.3 80" fill="none" stroke="#d8d8d8" stroke-width="1.100"/>
 <path d="M631 88.800H800" stroke="#2c2c2c" stroke-width="0.800"/>
 <!-- lock row -->
 <rect x="651" y="93.500" width="8" height="7.900" rx="0.600" fill="#7a7a7a" stroke="#0a0a0a" stroke-width="0.500"/>
 <rect x="652.300" y="94.800" width="1.700" height="1.700" fill="#3a3a3a"/><rect x="656" y="94.800" width="1.700" height="1.700" fill="#3a3a3a"/><rect x="654.150" y="96.600" width="1.700" height="1.700" fill="#3a3a3a"/><rect x="652.300" y="98.400" width="1.700" height="1.700" fill="#3a3a3a"/><rect x="656" y="98.400" width="1.700" height="1.700" fill="#3a3a3a"/>
 <path d="M673.600 94L668.300 99.300" stroke="#7a7a7a" stroke-width="1.100" stroke-linecap="round"/>
 <path d="M668.800 98.300Q666.500 99.300 665.600 101.800Q668.300 101.500 669.800 99.300Z" fill="#7a7a7a" stroke="#7a7a7a" stroke-width="0.700"/>
 <path d="M681.900 92.900L684.200 95.300H682.800V96.800H684.400V95.400L686.800 97.700L684.400 100V98.600H682.800V100.100H684.200L681.900 102.400L679.600 100.100H681V98.600H679.400V100L677 97.700L679.400 95.400V96.800H681V95.300H679.600Z" fill="#e2e2e2" stroke="#0a0a0a" stroke-width="0.700"/>
 <path d="M691.200 95.600H698.400M693 94.700V101.400M699.200 96.500V102M691.200 100.700H701.200" fill="none" stroke="#0a0a0a" stroke-width="2.200"/>
 <path d="M691.200 95.600H698.400M693 94.700V101.400M699.200 96.500V102M691.200 100.700H701.200" fill="none" stroke="#e2e2e2" stroke-width="1.200"/>
 <path d="M697.500 94.200Q700.800 94.500 701 97" fill="none" stroke="#e2e2e2" stroke-width="0.800"/>
 <path d="M707.800 97.200V95.800Q707.800 93.600 710.100 93.600Q712.400 93.600 712.400 95.800V97.200" fill="none" stroke="#0a0a0a" stroke-width="2"/>
 <path d="M707.800 97.200V95.800Q707.800 93.600 710.100 93.600Q712.400 93.600 712.400 95.800V97.200" fill="none" stroke="#e2e2e2" stroke-width="1.100"/>
 <rect x="706.200" y="96.800" width="7.800" height="5.400" rx="0.500" fill="#e2e2e2" stroke="#0a0a0a" stroke-width="0.600"/>
 <rect x="709.500" y="98.300" width="1.200" height="2" fill="#999"/>
 <rect x="743" y="93.100" width="21" height="10" rx="1" fill="#282828" stroke="#3c3c3c" stroke-width="0.800"/>
 <rect x="765.800" y="93.100" width="8.200" height="10" rx="1" fill="#282828" stroke="#3c3c3c" stroke-width="0.800"/>
 <path d="M767.5 97.2L769.9 99.5L772.3 97.2" fill="none" stroke="#d8d8d8" stroke-width="1.100"/>
 <path d="M631 105.300H800" stroke="#2c2c2c" stroke-width="0.800"/>
 <!-- list -->
 <rect x="627.500" y="106" width="172.500" height="265.300" fill="#2b2b2b"/><rect x="628" y="107.500" width="162" height="86.300" fill="#333"/>
 <rect x="646.800" y="107.8" width="143" height="13.900" fill="#474747"/><path d="M628 121.8H790" stroke="#2b2b2b" stroke-width="0.900"/><path d="M633.400 114.6Q637.700 109.8 642 114.6Q637.700 119.4 633.400 114.6Z" fill="#0a0a0a" stroke="#0a0a0a" stroke-width="1.500"/><path d="M633.400 114.6Q637.700 109.8 642 114.6Q637.700 119.4 633.400 114.6Z" fill="#e4e4e4"/><path d="M637.700 113.1L639.200 114.6L637.700 116.1L636.200 114.6Z" fill="#222"/><rect x="646.800" y="122.2" width="143" height="13.900" fill="#474747"/><path d="M628 136.2H790" stroke="#2b2b2b" stroke-width="0.900"/><path d="M633.400 129.0Q637.700 124.2 642 129.0Q637.700 133.8 633.400 129.0Z" fill="#0a0a0a" stroke="#0a0a0a" stroke-width="1.500"/><path d="M633.400 129.0Q637.700 124.2 642 129.0Q637.700 133.8 633.400 129.0Z" fill="#e4e4e4"/><path d="M637.700 127.5L639.200 129.0L637.700 130.5L636.200 129.0Z" fill="#222"/><path d="M628 150.6H790" stroke="#2b2b2b" stroke-width="0.900"/><path d="M633.400 143.4Q637.700 138.6 642 143.4Q637.700 148.2 633.400 143.4Z" fill="#0a0a0a" stroke="#0a0a0a" stroke-width="1.500"/><path d="M633.400 143.4Q637.700 138.6 642 143.4Q637.700 148.2 633.400 143.4Z" fill="#e4e4e4"/><path d="M637.700 141.9L639.200 143.4L637.700 144.9L636.200 143.4Z" fill="#222"/><path d="M628 164.9H790" stroke="#2b2b2b" stroke-width="0.900"/><path d="M633.400 157.7Q637.700 152.9 642 157.7Q637.700 162.5 633.400 157.7Z" fill="#0a0a0a" stroke="#0a0a0a" stroke-width="1.500"/><path d="M633.400 157.7Q637.700 152.9 642 157.7Q637.700 162.5 633.400 157.7Z" fill="#e4e4e4"/><path d="M637.700 156.2L639.200 157.7L637.700 159.2L636.200 157.7Z" fill="#222"/><path d="M628 179.3H790" stroke="#2b2b2b" stroke-width="0.900"/><path d="M633.400 172.1Q637.700 167.3 642 172.1Q637.700 176.9 633.400 172.1Z" fill="#0a0a0a" stroke="#0a0a0a" stroke-width="1.500"/><path d="M633.400 172.1Q637.700 167.3 642 172.1Q637.700 176.9 633.400 172.1Z" fill="#e4e4e4"/><path d="M637.700 170.6L639.200 172.1L637.700 173.6L636.200 172.1Z" fill="#222"/><path d="M628 193.6H790" stroke="#2b2b2b" stroke-width="0.900"/><path d="M633.400 186.4Q637.700 181.6 642 186.4Q637.700 191.2 633.400 186.4Z" fill="#0a0a0a" stroke="#0a0a0a" stroke-width="1.500"/><path d="M633.400 186.4Q637.700 181.6 642 186.4Q637.700 191.2 633.400 186.4Z" fill="#e4e4e4"/><path d="M637.700 184.9L639.200 186.4L637.700 187.9L636.200 186.4Z" fill="#222"/>
 <path d="M645.800 107.500V193.600" stroke="#2a2a2a" stroke-width="0.800"/>
</svg>
<div class="t" style="left:644px;top:61.3px;font-size:7px;color:#e8e8e8">Kind</div>
<div class="t" style="left:634.500px;top:77.5px;font-size:7px;color:#e8e8e8">Normal</div>
<div class="t" style="left:715.500px;top:77.5px;font-size:7px;color:#a0a0a0">Opacity:</div>
<div class="t" style="left:745px;top:77.5px;font-size:7px;color:#e8e8e8">100%</div>
<div class="t" style="left:630.500px;top:94.5px;font-size:7px;color:#a0a0a0">Lock:</div>
<div class="t" style="left:730.500px;top:94.5px;font-size:7px;color:#a0a0a0">Fill:</div>
<div class="t" style="left:745px;top:94.5px;font-size:7px;color:#e8e8e8">100%</div>
<svg style="left:0;top:0" width="800" height="469" viewBox="0 0 800 469"><circle cx="654.400" cy="114.50" r="3.900" fill="#e4e4e4" stroke="#0a0a0a" stroke-width="0.800"/><ellipse cx="654" cy="113.70" rx="3" ry="1.200" transform="rotate(-45 654 113.70)" fill="#1a1a1a"/><circle cx="663.300" cy="112.40" r="1.600" fill="none" stroke="#0a0a0a" stroke-width="1.900"/><circle cx="663.300" cy="112.40" r="1.600" fill="none" stroke="#e4e4e4" stroke-width="1"/><circle cx="663.300" cy="116.80" r="1.600" fill="none" stroke="#0a0a0a" stroke-width="1.900"/><circle cx="663.300" cy="116.80" r="1.600" fill="none" stroke="#e4e4e4" stroke-width="1"/><rect x="669.600" y="110.70" width="8.200" height="7.700" fill="#b8b8b8" stroke="#0a0a0a" stroke-width="1.800"/><rect x="669.600" y="110.70" width="8.200" height="7.700" fill="#b0b0b0" stroke="#f0f0f0" stroke-width="1.300"/><rect x="672.300" y="113.10" width="2.900" height="2.900" fill="#2a2a2a"/><path d="M669.5 108.80H667.6V111.70M677.7 108.80H679.6V111.70M669.5 120.30H667.6V117.40M677.7 120.30H679.6V117.40" fill="none" stroke="#0a0a0a" stroke-width="1.900"/><path d="M669.5 108.80H667.6V111.70M677.7 108.80H679.6V111.70M669.5 120.30H667.6V117.40M677.7 120.30H679.6V117.40" fill="none" stroke="#f4f4f4" stroke-width="1"/><circle cx="654.400" cy="128.90" r="3.900" fill="#e4e4e4" stroke="#0a0a0a" stroke-width="0.800"/><ellipse cx="654" cy="128.10" rx="3" ry="1.200" transform="rotate(-45 654 128.10)" fill="#1a1a1a"/><circle cx="663.300" cy="126.80" r="1.600" fill="none" stroke="#0a0a0a" stroke-width="1.900"/><circle cx="663.300" cy="126.80" r="1.600" fill="none" stroke="#e4e4e4" stroke-width="1"/><circle cx="663.300" cy="131.20" r="1.600" fill="none" stroke="#0a0a0a" stroke-width="1.900"/><circle cx="663.300" cy="131.20" r="1.600" fill="none" stroke="#e4e4e4" stroke-width="1"/><rect x="669.600" y="125.10" width="8.200" height="7.700" fill="#b8b8b8" stroke="#0a0a0a" stroke-width="1.800"/><rect x="669.600" y="125.10" width="8.200" height="7.700" fill="#b0b0b0" stroke="#f0f0f0" stroke-width="1.300"/><rect x="672.300" y="127.50" width="2.900" height="2.900" fill="#2a2a2a"/><path d="M669.5 123.20H667.6V126.10M677.7 123.20H679.6V126.10M669.5 134.70H667.6V131.80M677.7 134.70H679.6V131.80" fill="none" stroke="#0a0a0a" stroke-width="1.900"/><path d="M669.5 123.20H667.6V126.10M677.7 123.20H679.6V126.10M669.5 134.70H667.6V131.80M677.7 134.70H679.6V131.80" fill="none" stroke="#f4f4f4" stroke-width="1"/><path d="M650.7 139.60000000000002Q654.30 140.70 657.90 139.60000000000002Q656.80 143.20 657.90 146.80Q654.30 145.70 650.7 146.80Q651.80 143.20 650.7 139.60000000000002Z" fill="#2a2a2a" stroke="#0a0a0a" stroke-width="2.400"/><path d="M650.7 139.60000000000002Q654.30 140.70 657.90 139.60000000000002Q656.80 143.20 657.90 146.80Q654.30 145.70 650.7 146.80Q651.80 143.20 650.7 139.60000000000002Z" fill="#2a2a2a" stroke="#e4e4e4" stroke-width="1.400"/><rect x="649.60" y="138.50" width="2.200" height="2.200" fill="#e4e4e4"/><rect x="656.80" y="138.50" width="2.200" height="2.200" fill="#e4e4e4"/><rect x="649.60" y="145.70" width="2.200" height="2.200" fill="#e4e4e4"/><rect x="656.80" y="145.70" width="2.200" height="2.200" fill="#e4e4e4"/><path d="M650.7 153.9Q654.30 155.00 657.90 153.9Q656.80 157.50 657.90 161.10Q654.30 160.00 650.7 161.10Q651.80 157.50 650.7 153.9Z" fill="#2a2a2a" stroke="#0a0a0a" stroke-width="2.400"/><path d="M650.7 153.9Q654.30 155.00 657.90 153.9Q656.80 157.50 657.90 161.10Q654.30 160.00 650.7 161.10Q651.80 157.50 650.7 153.9Z" fill="#2a2a2a" stroke="#e4e4e4" stroke-width="1.400"/><rect x="649.60" y="152.80" width="2.200" height="2.200" fill="#e4e4e4"/><rect x="656.80" y="152.80" width="2.200" height="2.200" fill="#e4e4e4"/><rect x="649.60" y="160.00" width="2.200" height="2.200" fill="#e4e4e4"/><rect x="656.80" y="160.00" width="2.200" height="2.200" fill="#e4e4e4"/><path d="M650.7 168.3Q654.30 169.40 657.90 168.3Q656.80 171.90 657.90 175.50Q654.30 174.40 650.7 175.50Q651.80 171.90 650.7 168.3Z" fill="#2a2a2a" stroke="#0a0a0a" stroke-width="2.400"/><path d="M650.7 168.3Q654.30 169.40 657.90 168.3Q656.80 171.90 657.90 175.50Q654.30 174.40 650.7 175.50Q651.80 171.90 650.7 168.3Z" fill="#2a2a2a" stroke="#e4e4e4" stroke-width="1.400"/><rect x="649.60" y="167.20" width="2.200" height="2.200" fill="#e4e4e4"/><rect x="656.80" y="167.20" width="2.200" height="2.200" fill="#e4e4e4"/><rect x="649.60" y="174.40" width="2.200" height="2.200" fill="#e4e4e4"/><rect x="656.80" y="174.40" width="2.200" height="2.200" fill="#e4e4e4"/><rect x="649.700" y="181.6" width="9.600" height="9.800" fill="#333" stroke="#4c4c4c" stroke-width="0.900"/></svg>
<div class="t" style="left:684px;top:111.9px;font-size:6.8px;color:#dcdcdc">Levels</div>
<div class="t" style="left:684px;top:126.3px;font-size:6.8px;color:#dcdcdc">Levels</div>
<div class="t" style="left:664.2px;top:140.7px;font-size:6.8px;color:#dcdcdc">Rectangle</div>
<div class="t" style="left:664.2px;top:155.0px;font-size:6.8px;color:#dcdcdc">Rectangle</div>
<div class="t" style="left:664.2px;top:169.4px;font-size:6.8px;color:#dcdcdc">Rectangle</div>
<div class="t" style="left:664.2px;top:183.7px;font-size:6.8px;color:#dcdcdc">Background</div>
<div id="info" class="a"></div>
<svg style="left:0;top:0;will-change:transform" width="800" height="469" viewBox="0 0 800 469">
 <path d="M627.500 371.300H800" stroke="#2a2a2a" stroke-width="0.800"/>
 <rect x="627.500" y="371.700" width="172.500" height="15.300" fill="#343434"/>
 <path d="M676.600 377.400H674.200Q671.900 377.400 671.900 379.800Q671.900 382.200 674.200 382.200H676.600M677.100 377.400H679.500Q681.800 377.400 681.800 379.800Q681.800 382.200 679.500 382.200H677.100M674.600 379.800H679.100" fill="none" stroke="#0a0a0a" stroke-width="2.400" stroke-linejoin="round" stroke-linecap="round"/><path d="M676.600 377.400H674.200Q671.900 377.400 671.900 379.800Q671.900 382.200 674.200 382.200H676.600M677.100 377.400H679.500Q681.800 377.400 681.800 379.800Q681.800 382.200 679.500 382.200H677.100M674.600 379.800H679.100" fill="none" stroke="#e2e2e2" stroke-width="1.300"/>
 <text x="689.800" y="382.300" font-family="Liberation Sans" font-style="italic" font-size="8.500" fill="#7a7a7a">fx</text>
 <rect x="698.300" y="384.200" width="1.200" height="1.200" fill="#888"/>
 <rect x="706.700" y="376.300" width="8.400" height="5.800" fill="#8a8a8a" stroke="#1a1a1a" stroke-width="0.500"/>
 <circle cx="710.900" cy="379.200" r="1.600" fill="#2a2a2a"/>
 <circle cx="727.400" cy="379" r="3.800" fill="#e2e2e2" stroke="#0a0a0a" stroke-width="0.900"/>
 <ellipse cx="727" cy="378.200" rx="2.900" ry="1.150" transform="rotate(-45 727 378.200)" fill="#1a1a1a"/>
 <rect x="732.200" y="383.600" width="2.600" height="2.400" fill="#f4f4f4" stroke="#0a0a0a" stroke-width="0.600"/>
 <path d="M740.100 376.300H743.800L744.600 377.300H748.800V382.300H740.100Z" fill="#0a0a0a" stroke="#0a0a0a" stroke-width="1.2" stroke-linejoin="round"/><path d="M740.100 376.300H743.800L744.600 377.300H748.800V382.300H740.100Z" fill="#e4e4e4"/>
 <path d="M758.200 376.200H764.600V382.800H760.300L758.200 380.700Z" fill="#c8c8c8" stroke="#0a0a0a" stroke-width="2.300" stroke-linejoin="round"/><path d="M758.200 376.200H764.600V382.800H760.300L758.200 380.700Z" fill="#c8c8c8" stroke="#e2e2e2" stroke-width="1.200"/>
 <path d="M759.600 378.100H762.500V381.200" fill="none" stroke="#111" stroke-width="1"/>
 <path d="M774.800 377.600L778.300 375L781.800 377.600V378.300H774.800Z" fill="#c8c8c8" stroke="#0a0a0a" stroke-width="0.800"/>
 <path d="M775.200 378.700H781.400L780.800 384H775.800Z" fill="#b8b8b8" stroke="#0a0a0a" stroke-width="0.800"/>
 <path d="M776.200 380.500H780.400M776.300 382.300H780.200" stroke="#8a8a8a" stroke-width="0.600"/>
 <!-- info panel tabs -->
 <rect x="627.500" y="387" width="172.500" height="12.300" fill="#292929"/>
 <rect x="628.200" y="387.500" width="21" height="11.800" fill="#333"/>
 <rect x="789" y="392" width="6.700" height="4.900" fill="#6a6a6a"/>
 <path d="M714.300 399.300V463.800" stroke="#2a2a2a" stroke-width="1"/>
 <path d="M627.500 442.300H800M627.500 463.800H800" stroke="#2a2a2a" stroke-width="1"/>
 <path d="M639.2 414.300L634.6 418.800Q633.6 420 634.5 420.600Q635.3 421.100 636.3 420.100L640.9 415.500" fill="none" stroke="#0a0a0a" stroke-width="2.20" stroke-linejoin="round" stroke-linecap="round"/><path d="M639.2 414.300L634.6 418.800Q633.6 420 634.5 420.600Q635.3 421.100 636.3 420.100L640.9 415.500" fill="none" stroke="#e2e2e2" stroke-width="1.1"/><path d="M638.2 414.200L640.7 411.600Q642.0 410.600 642.8 411.400Q643.5 412.300 642.5 413.400L640.0 416Z" fill="#0a0a0a" stroke="#0a0a0a" stroke-width="1.1" stroke-linejoin="round"/><path d="M638.2 414.200L640.7 411.600Q642.0 410.600 642.8 411.400Q643.5 412.300 642.5 413.400L640.0 416Z" fill="#e2e2e2"/><path d="M640.3 417.800H643.3L641.8 419.800Z" fill="#0a0a0a" stroke="#0a0a0a" stroke-width="0.8" stroke-linejoin="round"/><path d="M640.3 417.800H643.3L641.8 419.800Z" fill="#e2e2e2"/>
 <path d="M723.8 414.300L719.2 418.800Q718.2 420 719.1 420.600Q719.9 421.100 720.9 420.100L725.5 415.500" fill="none" stroke="#0a0a0a" stroke-width="2.20" stroke-linejoin="round" stroke-linecap="round"/><path d="M723.8 414.300L719.2 418.800Q718.2 420 719.1 420.600Q719.9 421.100 720.9 420.100L725.5 415.500" fill="none" stroke="#e2e2e2" stroke-width="1.1"/><path d="M722.8 414.200L725.3 411.600Q726.6 410.600 727.4 411.400Q728.1 412.300 727.1 413.400L724.6 416Z" fill="#0a0a0a" stroke="#0a0a0a" stroke-width="1.1" stroke-linejoin="round"/><path d="M722.8 414.200L725.3 411.600Q726.6 410.600 727.4 411.400Q728.1 412.300 727.1 413.400L724.6 416Z" fill="#e2e2e2"/><path d="M724.9 417.800H727.9L726.4 419.800Z" fill="#0a0a0a" stroke="#0a0a0a" stroke-width="0.8" stroke-linejoin="round"/><path d="M724.9 417.800H727.9L726.4 419.800Z" fill="#e2e2e2"/>
 <!-- crosshair -->
 <path d="M637.300 449.700V458.300M633.200 453.600H641.400" fill="none" stroke="#0a0a0a" stroke-width="2.40" stroke-linejoin="round" stroke-linecap="round"/><path d="M637.300 449.700V458.300M633.200 453.600H641.400" fill="none" stroke="#e2e2e2" stroke-width="1.3"/>
 <path d="M640.200 456.300H642.600L641.400 458Z" fill="#0a0a0a" stroke="#0a0a0a" stroke-width="0.8" stroke-linejoin="round"/><path d="M640.200 456.300H642.600L641.400 458Z" fill="#e2e2e2"/>
 <!-- transform -->
 <rect x="718" y="450.300" width="8.200" height="7.300" rx="0.800" fill="none" stroke="#0a0a0a" stroke-width="2.300"/>
 <rect x="718" y="450.300" width="8.200" height="7.300" rx="0.800" fill="none" stroke="#e2e2e2" stroke-width="1.300"/>
 <rect x="720.300" y="452.300" width="3.600" height="3.300" fill="none" stroke="#bbb" stroke-width="0.800"/>
 <circle cx="726" cy="450.500" r="1.100" fill="#fff"/><circle cx="718.200" cy="457.400" r="1.100" fill="#fff"/>
</svg>
<div class="t" style="left:632.500px;top:391.2px;font-size:7px;font-weight:bold;color:#f2f2f2">Info</div>
<div class="t" style="left:648.6px;top:405.8px;font-size:6.6px;color:#9a9a9a">R</div>
<div class="t" style="left:654.5px;top:405.8px;font-size:6.6px;color:#9a9a9a">:</div>
<div class="t" style="left:648.6px;top:413.3px;font-size:6.6px;color:#9a9a9a">G</div>
<div class="t" style="left:654.5px;top:413.3px;font-size:6.6px;color:#9a9a9a">:</div>
<div class="t" style="left:648.6px;top:420.1px;font-size:6.6px;color:#9a9a9a">B</div>
<div class="t" style="left:654.5px;top:420.1px;font-size:6.6px;color:#9a9a9a">:</div>
<div class="t" style="left:733.4px;top:405.8px;font-size:6.6px;color:#9a9a9a">R</div>
<div class="t" style="left:739.3px;top:405.8px;font-size:6.6px;color:#9a9a9a">:</div>
<div class="t" style="left:733.4px;top:413.3px;font-size:6.6px;color:#9a9a9a">G</div>
<div class="t" style="left:739.3px;top:413.3px;font-size:6.6px;color:#9a9a9a">:</div>
<div class="t" style="left:733.4px;top:420.1px;font-size:6.6px;color:#9a9a9a">B</div>
<div class="t" style="left:739.3px;top:420.1px;font-size:6.6px;color:#9a9a9a">:</div>
<div class="t" style="left:648.6px;top:447.3px;font-size:6.6px;color:#9a9a9a">X</div>
<div class="t" style="left:654.5px;top:447.3px;font-size:6.6px;color:#9a9a9a">:</div>
<div class="t" style="left:648.6px;top:453.9px;font-size:6.6px;color:#9a9a9a">Y</div>
<div class="t" style="left:654.5px;top:453.9px;font-size:6.6px;color:#9a9a9a">:</div>
<div class="t" style="left:732.2px;top:447.3px;font-size:6.6px;color:#9a9a9a">W</div>
<div class="t" style="left:738.8000000000001px;top:447.3px;font-size:6.6px;color:#9a9a9a">:</div>
<div class="t" style="left:732.2px;top:453.9px;font-size:6.6px;color:#9a9a9a">H</div>
<div class="t" style="left:738.8000000000001px;top:453.9px;font-size:6.6px;color:#9a9a9a">:</div>
<div class="t" style="left:641.6px;top:433.4px;font-size:7.4px;color:#9a9a9a">8-bit</div>
<div class="t" style="left:722.8px;top:433.4px;font-size:7.4px;color:#9a9a9a">32-bit</div>


</body></html>
